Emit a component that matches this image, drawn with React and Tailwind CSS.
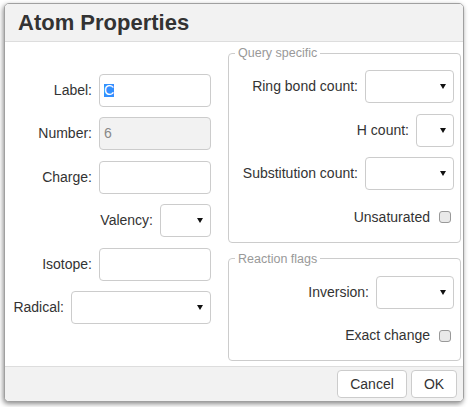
const font = { fontFamily: '"Liberation Sans", Arial, sans-serif' }

function Arrow() {
  return (
    <svg width="6" height="5" viewBox="0 0 6 5" className="block">
      <polygon points="0,0 6,0 3,5" fill="#111" />
    </svg>
  )
}

function Select({ width }) {
  return (
    <div
      className={`h-[33px] ${width} shrink-0 bg-white border border-[#ccc] rounded-[4px] flex items-center justify-end pr-[7px]`}
    >
      <Arrow />
    </div>
  )
}

function TextBox({ children, disabled }) {
  return (
    <div
      className={`h-[33px] w-[112px] shrink-0 border border-[#ccc] rounded-[4px] flex items-center pl-[4px] text-[14px] ${
        disabled ? 'bg-[#f2f2f2] text-[#888]' : 'bg-white text-[#333]'
      }`}
    >
      {children}
    </div>
  )
}

function Row({ label, children }) {
  return (
    <div className="h-[33px] flex items-center justify-end gap-[7px]">
      <span className="text-[14px] text-[#333]">{label}</span>
      {children}
    </div>
  )
}

function CheckRow({ label }) {
  return (
    <div className="h-[33px] flex items-center justify-end pr-[3px]">
      <span className="text-[14px] text-[#333]">{label}</span>
      <span className="ml-[9px] w-[12px] h-[12px] rounded-[3px] border border-[#999] bg-[#e9e9e9]" />
    </div>
  )
}

function Group({ title, className = '', children }) {
  return (
    <fieldset className={`border border-[#ccc] rounded-[4px] px-[6px] pt-[10px] pb-[8px] ${className}`}>
      <legend className="px-[3px] text-[12.5px] leading-[14px] text-[#999]">{title}</legend>
      <div className="flex flex-col gap-[10.5px]">{children}</div>
    </fieldset>
  )
}

export default function App() {
  return (
    <div className="w-[469px] h-[407px] bg-white pl-[4px] pt-[3px]" style={font}>
      <div className="w-[460px] h-[399px] border border-[#a0a0a0] rounded-[5px] overflow-hidden bg-white flex flex-col shadow-[-1px_2px_5px_rgba(0,0,0,0.45)]">
        <div className="h-[38px] shrink-0 bg-[#f2f2f2] border-b border-[#ddd] flex items-center pl-[13px]">
          <h1 className="text-[22px] font-bold text-[#333]">Atom Properties</h1>
        </div>

        <div className="h-[324px] shrink-0 flex">
          <div className="w-[206px] pt-[32px] flex flex-col gap-[10.4px]">
            <Row label="Label:">
              <TextBox>
                <span className="bg-[#3390ff] text-white leading-[13px] inline-block">C</span>
              </TextBox>
            </Row>
            <Row label="Number:">
              <TextBox disabled>6</TextBox>
            </Row>
            <Row label="Charge:">
              <TextBox />
            </Row>
            <Row label="Valency:">
              <Select width="w-[51px]" />
            </Row>
            <Row label="Isotope:">
              <TextBox />
            </Row>
            <Row label="Radical:">
              <Select width="w-[140px]" />
            </Row>
          </div>

          <div className="ml-[17px] w-[233px] pt-[4px] flex flex-col">
            <Group title="Query specific">
              <Row label="Ring bond count:">
                <Select width="w-[89px]" />
              </Row>
              <Row label="H count:">
                <Select width="w-[38px]" />
              </Row>
              <Row label="Substitution count:">
                <Select width="w-[89px]" />
              </Row>
              <CheckRow label="Unsaturated" />
            </Group>
            <Group title="Reaction flags" className="mt-[9px]">
              <Row label="Inversion:">
                <Select width="w-[78px]" />
              </Row>
              <CheckRow label="Exact change" />
            </Group>
          </div>
        </div>

        <div className="flex-1 bg-[#f2f2f2] border-t border-[#ddd] flex items-center justify-end gap-[4px] pr-[6px]">
          <button className="h-[28px] w-[70px] bg-white border border-[#ccc] rounded-[4px] text-[14px] text-[#333]">
            Cancel
          </button>
          <button className="h-[28px] w-[46px] bg-white border border-[#ccc] rounded-[4px] text-[14px] text-[#333]">
            OK
          </button>
        </div>
      </div>
    </div>
  )
}
